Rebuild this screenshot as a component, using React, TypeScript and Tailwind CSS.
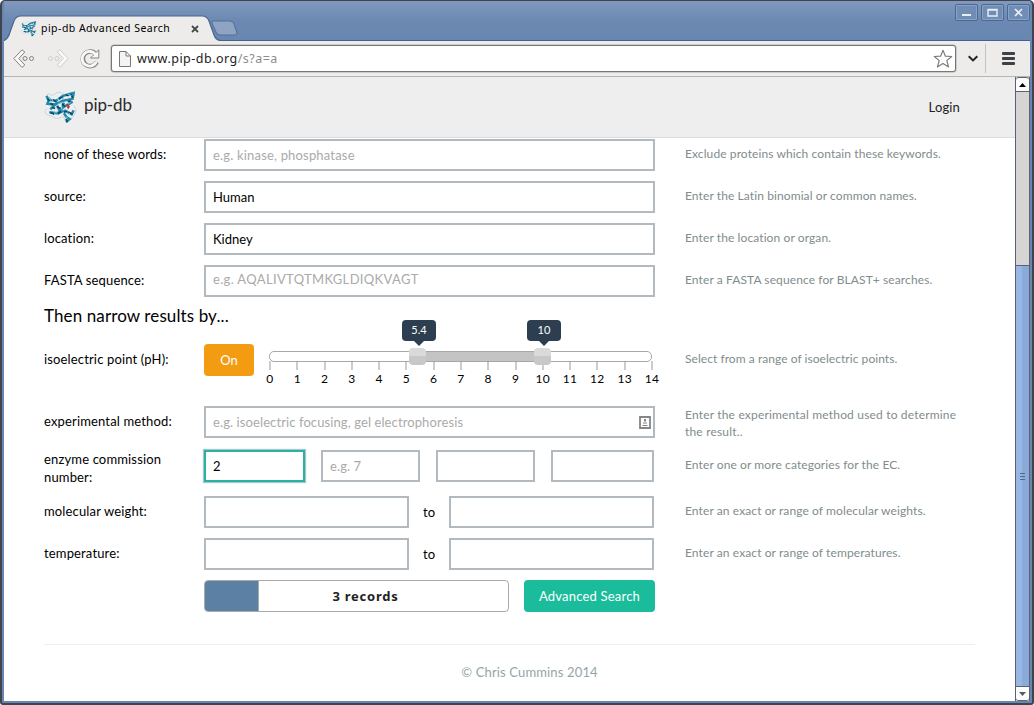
import React from "react";

const LATO = "font-['Lato','Liberation_Sans',sans-serif]";

function Protein({ size }: { size: number }) {
  return (
    <svg width={size} height={size} viewBox="0 0 33 34" fill="none" className="shrink-0">
      <g stroke="#b7d3dc" strokeWidth="0.8">
        <path d="M2 4 Q3 1 6 4 Q10 5 12 2 Q16 0 19 3 Q22 5 25 2 Q30 0 31 5" />
        <path d="M3 18 Q-1 20 1 23 Q4 26 8 26 Q12 30 17 27 Q20 25 21 30 Q29 29 31 24 Q34 19 30 15" />
      </g>
      <g stroke="#2389ad" strokeWidth="2.6">
        <path d="M2 5 L4 9 L12 10 L19 5 L30 2 L29 8 L19 10 L10 14 L3 13 L5 8" />
        <path d="M6 19 L12 13 L15 19 L24 14 L29 11" />
        <path d="M5 22 L14 23 L18 18 L20 12" />
        <path d="M14 23 L21 20 L28 24 L30 20" />
        <path d="M20 23 L23 27 L26 29 L22 32" />
      </g>
      <g stroke="#0d4459" strokeWidth="1.6">
        <path d="M3 8 L5 10 M8 9 L12 11 M15 8 L19 6 M22 4 L25 5 M27 3 L29 7 M6 13 L9 14 M8 17 L11 18 M13 16 L16 18 M18 13 L21 16 M6 22 L10 24 M14 23 L17 21 M20 22 L23 21 M25 22 L29 24 M22 29 L24 32 M24 11 L27 10" />
      </g>
      <g stroke="#d5ebf1" strokeWidth="0.8">
        <path d="M7 7 L9 11 M13 6 L15 11 M20 8 L25 7 M11 16 L14 14 M17 15 L18 19 M9 20 L12 21 M19 20 L22 18 M24 25 L26 23" />
      </g>
      <g stroke="#62c3de" strokeWidth="1.1">
        <path d="M5 6 L6 9 M17 8 L20 7 M24 3 L28 5 M14 13 L17 12 M10 23 L13 22 M23 13 L27 12 M21 27 L24 27" />
      </g>
      <path d="M23 14 L25 16 L24 18" stroke="#d3273c" strokeWidth="2" />
    </svg>
  );
}

function WindowButton({ children }: { children: React.ReactNode }) {
  return (
    <div className="flex h-[17px] w-[23px] items-center justify-center rounded-[2px] border border-[#4a6893] bg-[#6f8db5] shadow-[inset_0_0_0_1px_#8ba4c6]">
      <svg width="13" height="11" viewBox="0 0 13 11" fill="none">
        {children}
      </svg>
    </div>
  );
}

function TitleBar() {
  return (
    <div className="flex h-[40px] shrink-0 items-end justify-between border-b border-[#44618a] bg-linear-to-b from-[#8199bd] via-[#6b89b2] via-50% to-[#6786b1]">
      <div className="relative -mb-px flex h-[26px] w-[250px] items-end">
        <svg width="250" height="26" viewBox="0 0 250 26" fill="none" className="absolute top-0 left-0">
          <path d="M0 26 C3 24 5 22 6 18 L10 6 Q12 1 17 1 H198 Q203 1 205 6 L210 20 Q212 25 217 26 Z" fill="#edecea" />
          <path d="M0 25.5 C3 24 5 21 6 17 L10 6 Q12 1 17 1 H198 Q203 1 205 6 L210 20 Q212 25.5 217 25.5" stroke="#4b6690" strokeWidth="1.2" />
          <path d="M209 6 H226 Q229 6 230 9 L233 18 Q233 20 231 20 H216 Q213 20 212 17 L208 8 Q207 6 209 6 Z" fill="#8fa4c2" stroke="#536e96" />
        </svg>
        <div className="relative flex h-[25px] w-[200px] items-center pl-[17px]">
          <Protein size={16} />
          <span className="ml-1 w-[150px] pt-px font-['Noto_Sans',sans-serif] text-[10.5px] tracking-[0.47px] whitespace-nowrap text-black">
            pip-db Advanced Search
          </span>
          <svg width="8" height="8" viewBox="0 0 8 8" stroke="#45484b" strokeWidth="1.8" className="shrink-0">
            <path d="M1 1 L7 7 M7 1 L1 7" />
          </svg>
        </div>
      </div>
      <div className="mb-[19px] flex gap-[3px]">
        <WindowButton><path d="M2 8 H11" stroke="#e9eef6" strokeWidth="2" /></WindowButton>
        <WindowButton><path d="M2 2.5 H11 V9 H2 Z M2 3 H11" stroke="#e9eef6" strokeWidth="1.4" /></WindowButton>
        <WindowButton><path d="M3 2 L10 9 M10 2 L3 9" stroke="#e9eef6" strokeWidth="1.7" /></WindowButton>
      </div>
    </div>
  );
}

function Arrow({ light, flip }: { light?: boolean; flip?: boolean }) {
  const color = light ? "#cfcecc" : "#838380";
  return (
    <svg width="22" height="20" viewBox="0 0 22 20" fill="none" stroke={color} className={flip ? "-scale-x-100" : ""}>
      <path d="M9 0.8 L11.8 3 L5.8 9.5 L11.8 16 L9 18.4 L0.8 9.5 Z" fill="#f8f8f7" strokeLinejoin="round" />
      <circle cx="12" cy="9.5" r="2" />
      <circle cx="18.5" cy="9.5" r="2" />
    </svg>
  );
}

function Toolbar() {
  return (
    <div className="flex h-[36px] shrink-0 items-center border-b border-[#b4b6b4] bg-[#edecea]">
      <div className="flex w-[107px] items-center pl-[9px]">
        <Arrow />
        <div className="ml-[12px]"><Arrow light flip /></div>
        <svg width="20" height="20" viewBox="0 0 20 20" fill="none" className="ml-[11px]">
          <path d="M16 5.5 A7.3 7.3 0 1 0 16.7 13" stroke="#858583" strokeWidth="4.6" />
          <path d="M18.8 0.8 V9 H10.5 L13.2 6.3 L16.3 3.3 Z" fill="#f8f8f7" stroke="#858583" strokeLinejoin="round" />
          <path d="M15.7 5.8 A7.3 7.3 0 1 0 16.2 12.8" stroke="#f8f8f7" strokeWidth="2.8" />
        </svg>
      </div>
      <div className="flex h-[27px] w-[845px] items-center rounded-[3px] border border-[#777] bg-white pr-[2px] pl-[7px] shadow-[0_0_0_0.5px_#aaa]">
        <svg width="12" height="16" viewBox="0 0 12 16" fill="#f4f4f4" stroke="#777">
          <path d="M0.5 0.5 H7 L11.5 5 V15.5 H0.5 Z M7 0.5 V5 H11.5" />
        </svg>
        <span className="ml-[6px] grow font-['Noto_Sans',sans-serif] text-[12.5px] leading-4 tracking-[0.48px] text-[#222]">
          www.pip-db.org<span className="text-[#8d8d8d]">/s?a=a</span>
        </span>
        <svg width="20" height="20" viewBox="0 0 20 20" fill="#fff" stroke="#7d7d7d" strokeWidth="1.2" strokeLinejoin="round">
          <path d="M10 1.3 L12.4 7.2 L18.7 7.5 L13.8 11.6 L15.6 18 L10 14.4 L4.4 18 L6.2 11.6 L1.3 7.5 L7.6 7.2 Z" />
        </svg>
      </div>
      <svg width="10" height="8" viewBox="0 0 10 8" fill="none" stroke="#222" strokeWidth="2" className="ml-[12px]">
        <path d="M0.7 1.2 L5 5.4 L9.3 1.2" />
      </svg>
      <div className="ml-[7px] h-[29px] w-px bg-[#c4c3c1]" />
      <div className="ml-[16px] flex flex-col gap-[2px]">
        <div className="h-[3px] w-[13px] rounded-[1px] bg-[#3f4245]" />
        <div className="h-[3px] w-[13px] rounded-[1px] bg-[#3f4245]" />
        <div className="h-[3px] w-[13px] rounded-[1px] bg-[#3f4245]" />
      </div>
    </div>
  );
}

function ScrollBar() {
  return (
    <div className="flex w-[15px] shrink-0 flex-col border-x border-[#5a6170] bg-[#d6d5d3]">
      <div className="flex h-[15px] items-center justify-center rounded-t-[3px] border-y border-[#5a6170] bg-[#fcfcfb]">
        <svg width="7" height="4" viewBox="0 0 7 4" fill="#000"><path d="M0 4 L3.5 0 L7 4 Z" /></svg>
      </div>
      <div className="h-[173px]" />
      <div className="flex grow flex-col items-center justify-center gap-[2px] border-t border-[#5a6170] bg-linear-to-r from-[#97b8e4] from-50% to-[#8aabd9] to-50%">
        <div className="h-px w-[5px] bg-[#52688a]" />
        <div className="h-px w-[5px] bg-[#52688a]" />
        <div className="h-px w-[5px] bg-[#52688a]" />
      </div>
      <div className="flex h-[15px] items-center justify-center rounded-b-[3px] border-y border-[#5a6170] bg-[#fcfcfb]">
        <svg width="7" height="4" viewBox="0 0 7 4" fill="#555b66"><path d="M0 0 L3.5 4 L7 0 Z" /></svg>
      </div>
    </div>
  );
}

function Row({ label, help, className = "", labelClass = "pb-[2px]", helpClass = "pb-[4px] tracking-[0.1px]", children }: {
  label?: React.ReactNode;
  help?: React.ReactNode;
  className?: string;
  labelClass?: string;
  helpClass?: string;
  children: React.ReactNode;
}) {
  return (
    <div className={"flex h-8 shrink-0 items-center " + className}>
      <div className={"w-[160px] text-[13px] leading-[18px] tracking-[0.15px] text-black " + labelClass}>{label}</div>
      <div className="flex h-8 w-[451px]">{children}</div>
      <div className={"ml-[30px] w-[290px] text-[12px] leading-[17px] text-[#7f8c8d] " + helpClass}>{help}</div>
    </div>
  );
}

function Field({ value, hint, active, className = "w-full", hintClass = "tracking-[0.1px]", children }: {
  value?: string;
  hint?: string;
  active?: boolean;
  className?: string;
  hintClass?: string;
  children?: React.ReactNode;
}) {
  const frame = active ? "border-[#2bb1a0] shadow-[0_0_1px_1px_#a9c6d2]" : "border-[#b2bac0]";
  return (
    <div className={"flex h-8 items-center justify-between border-2 bg-white px-[7px] text-[13px] leading-4 " + frame + " " + className}>
      {value ? <span className="text-black">{value}</span> : <span className={"text-[#aaa] " + hintClass}>{hint}</span>}
      {children}
    </div>
  );
}

function Tip({ text }: { text: string }) {
  return (
    <div className="absolute -top-[28px] -left-[7px] flex flex-col items-center">
      <div className="h-[21px] w-[34px] rounded-[4px] bg-[#2c3e50] text-center text-[11px] leading-[20px] text-white">{text}</div>
      <svg width="10" height="5" viewBox="0 0 10 5" fill="#2c3e50"><path d="M0 0 H10 L5 5 Z" /></svg>
    </div>
  );
}

function Handle({ text, className }: { text: string; className: string }) {
  return (
    <div className={"absolute top-[4px] h-[17px] w-[17px] rounded-[4px] bg-linear-to-b from-[#dadada] from-50% to-[#c8c8c8] to-50% " + className}>
      <Tip text={text} />
    </div>
  );
}

function Slider() {
  const marks = Array.from({ length: 15 }, (_, i) => i);
  return (
    <div className="relative ml-[15px] h-10 w-[383px] shrink-0 pt-[7px]">
      <div className="h-[11px] rounded-[5px] border border-[#a8a8a8] bg-white px-[139px]">
        <div className="h-full w-[134px] bg-[#c4c4c4]" />
      </div>
      <div className="-mt-px flex w-[409px] -translate-x-[12.5px] justify-between">
        {marks.map((m) => (
          <div key={m} className="flex w-[27px] flex-col items-center">
            <div className="h-[9px] w-px bg-[#999]" />
            <span className="text-[12px] leading-[17px] tracking-[0.3px] text-black">{m}</span>
          </div>
        ))}
      </div>
      <Handle text="5.4" className="left-[140px]" />
      <Handle text="10" className="left-[265px]" />
    </div>
  );
}

function Page() {
  return (
    <div className={"flex min-w-0 grow flex-col bg-white " + LATO}>
      <header className="flex h-[61px] shrink-0 items-center border-b border-[#dcdcdc] bg-[#eee] pr-[55px] pl-[40px]">
        <Protein size={33} />
        <span className="ml-[7px] grow pb-[4px] text-[17px] leading-6 tracking-[-0.1px] text-[#2b2b2b]">pip-db</span>
        <span className="text-[13px] leading-5 tracking-[0.15px] text-[#222]">Login</span>
      </header>
      <main className="flex flex-col px-[40px] pt-px">
        <Row label="none of these words:" help="Exclude proteins which contain these keywords."><Field hint="e.g. kinase, phosphatase" hintClass="tracking-[0.18px]" /></Row>
        <Row className="mt-2.5" label="source:" help="Enter the Latin binomial or common names."><Field value="Human" /></Row>
        <Row className="mt-2.5" label="location:" help="Enter the location or organ."><Field value="Kidney" /></Row>
        <Row className="mt-2.5" label="FASTA sequence:" help="Enter a FASTA sequence for BLAST+ searches."><Field className="w-full pb-[4px]" hint="e.g. AQALIVTQTMKGLDIQKVAGT" hintClass="tracking-[0.34px]" /></Row>
        <h2 className="mt-[7px] h-[24px] text-[17px] leading-6 tracking-[0.11px] text-black">Then narrow results by...</h2>
        <Row className="mt-[16px]" label="isoelectric point (pH):" help="Select from a range of isoelectric points." helpClass="pb-[4px] tracking-[0.05px]">
          <button className="h-8 w-[50px] shrink-0 rounded-[4px] bg-[#f39c12] pt-px text-[13px] text-white">On</button>
          <Slider />
        </Row>
        <Row className="mt-[30px]" label="experimental method:" helpClass="tracking-[0.18px] pt-[2px]" help={<>Enter the experimental method used to determine<br />the result..</>}>
          <Field hint="e.g. isoelectric focusing, gel electrophoresis" className="w-full pr-[2px]">
            <svg width="12" height="13" viewBox="0 0 12 13" fill="none" stroke="#858585">
              <path d="M1 1 H11 V12 H1 Z" strokeWidth="1.8" />
              <path d="M3.5 9.5 H8.5 M4 7 H8" />
              <path d="M6 3 V5.5" strokeWidth="2" />
            </svg>
          </Field>
        </Row>
        <Row className="mt-3" labelClass="pt-[4px]" label={<>enzyme commission<br />number:</>} help="Enter one or more categories for the EC.">
          <Field value="2" active className="w-[101px]" />
          <Field hint="e.g. 7" className="ml-4 w-[99px]" />
          <Field className="ml-4 w-[99px]" />
          <Field className="ml-4 w-[103px]" />
        </Row>
        <Row className="mt-[14px]" label="molecular weight:" help="Enter an exact or range of molecular weights.">
          <Field className="w-[205px]" /><span className="w-10 text-center text-[13px] leading-8">to</span><Field className="w-[205px]" />
        </Row>
        <Row className="mt-2.5" label="temperature:" help="Enter an exact or range of temperatures.">
          <Field className="w-[205px]" /><span className="w-10 text-center text-[13px] leading-8">to</span><Field className="w-[205px]" />
        </Row>
        <Row className="mt-2.5">
          <div className="relative flex w-[305px] overflow-hidden rounded-[4px] border border-[#aaa]">
            <div className="h-full w-[54px] border-r border-[#aaa] bg-[#5c7fa4]" />
            <span className="absolute inset-x-0 pl-[18px] text-center font-['Noto_Sans',sans-serif] text-[13px] leading-[30px] font-bold tracking-[0.75px] text-[#222]">3 records</span>
          </div>
          <button className="ml-[15px] h-8 w-[131px] rounded-[4px] bg-[#1abc9c] pt-px text-[13px] tracking-[0.2px] text-white">Advanced Search</button>
        </Row>
      </main>
      <footer className="mx-[40px] mt-8 border-t border-[#ecf0f1] pt-[17px] pl-[40px] text-center text-[13px] leading-5 tracking-[0.15px] text-[#95a5a6]">© Chris Cummins 2014</footer>
    </div>
  );
}

export default function App() {
  return (
    <div className="h-[705px] w-[1034px] overflow-hidden bg-white">
      <div className="flex h-full flex-col rounded-t-[5px] rounded-b-[3px] border-2 border-t border-[#40454d] bg-[#6786b1] px-[2px] pb-[2px]">
        <TitleBar />
        <Toolbar />
        <div className="flex min-h-0 grow">
          <Page />
          <ScrollBar />
        </div>
      </div>
    </div>
  );
}
